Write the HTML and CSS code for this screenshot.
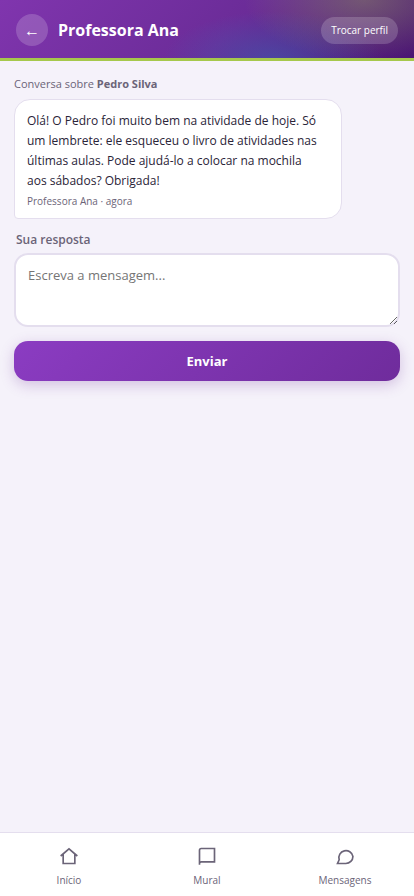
FILE: index.html
```html
<!DOCTYPE html>
<html lang="pt-BR">
<head>
<meta charset="utf-8">
<meta name="viewport" content="width=device-width, initial-scale=1">
<title>Professora Ana</title>
<link rel="stylesheet" href="styles.css">
</head>
<body>
<header class="topbar">
  <button class="back" type="button" aria-label="Voltar">←</button>
  <h1 class="title">Professora Ana</h1>
  <button class="switch" type="button">Trocar perfil</button>
</header>
<main class="content">
  <p class="context">Conversa sobre <strong>Pedro Silva</strong></p>
  <article class="bubble">
    <p class="bubble-text">Olá! O Pedro foi muito bem na atividade de hoje. Só um lembrete: ele esqueceu o livro de atividades nas últimas aulas. Pode ajudá-lo a colocar na mochila aos sábados? Obrigada!</p>
    <p class="bubble-meta">Professora Ana · agora</p>
  </article>
  <form class="reply">
    <label class="label" for="reply">Sua resposta</label>
    <textarea class="input" id="reply" placeholder="Escreva a mensagem..."></textarea>
    <button class="send" type="button">Enviar</button>
  </form>
</main>
<nav class="tabs">
  <a class="tab" href="#inicio">
    <svg class="icon" viewBox="0 0 24 24"><path d="M2 12 12 3.500 22 12M5 10v11h14V10"/></svg>
    Início
  </a>
  <a class="tab" href="#mural">
    <svg class="icon" viewBox="0 0 24 24"><path d="M3 22.500V5a2 2 0 0 1 2-2h16v16H5a2 2 0 0 0-2 2"/></svg>
    Mural
  </a>
  <a class="tab" href="#mensagens">
    <svg class="icon" viewBox="0 0 24 24"><path d="M21.500 12.500a8.500 8.500 0 0 1-8.500 8.500H3l2-4.500A8.500 8.500 0 1 1 21.500 12.500z"/></svg>
    Mensagens
  </a>
</nav>
</body>
</html>
```
FILE: styles.css
```css
* { box-sizing: border-box; }

body {
  margin: 0;
  min-height: 100vh;
  display: flex;
  flex-direction: column;
  background: #f5f2fa;
  color: #2a2438;
  font-family: "Segoe UI", "Open Sans", "Noto Sans", sans-serif;
}

h1, p { margin: 0; }
button, textarea { font-family: inherit; }

.topbar {
  display: flex;
  align-items: center;
  gap: 10px;
  padding: 14px 16px 12px;
  border-bottom: 3px solid #a6c84c;
  background:
    radial-gradient(ellipse 120px 60px at 88% 0, rgba(166, 200, 76, 0.32), transparent),
    radial-gradient(ellipse 110px 50px at 66% 100%, rgba(50, 110, 190, 0.45), transparent),
    linear-gradient(135deg, #8035ae 0%, #6b2c98 55%, #4a1572 100%);
  background-origin: border-box;
  color: #fff;
}

.back {
  width: 32px;
  height: 32px;
  padding: 0;
  border: 0;
  border-radius: 50%;
  background: rgba(255, 255, 255, 0.18);
  color: #fff;
  font-size: 16px;
}

.title {
  flex: 1;
  font-size: 16px;
  line-height: 24px;
  font-weight: 700;
}

.switch {
  padding: 5px 10px;
  border: 0;
  border-radius: 14px;
  background: rgba(255, 255, 255, 0.18);
  color: #fff;
  font-size: 10px;
  line-height: 17px;
}

.content {
  flex: 1;
  padding: 14px;
}

.context {
  margin-bottom: 6px;
  color: #6b6478;
  font-size: 11px;
  line-height: 18px;
}

.bubble {
  width: 85%;
  padding: 11px 20px 9px 12px;
  border: 1px solid #e4deee;
  border-radius: 16px 16px 16px 4px;
  background: #fff;
}

.bubble-text {
  font-size: 12px;
  line-height: 20px;
}

.bubble-meta {
  margin-top: 2px;
  color: #6b6478;
  font-size: 10px;
  line-height: 16px;
}

.reply {
  display: flex;
  flex-direction: column;
  margin-top: 12px;
}

.label {
  margin: 0 2px 4px;
  color: #6b6478;
  font-size: 12px;
  font-weight: 600;
  line-height: 18px;
}

.input {
  height: 74px;
  padding: 10px 12px;
  border: 2px solid #e4deee;
  border-radius: 14px;
  background: #fff;
  font-size: 13px;
  line-height: 20px;
  resize: vertical;
}

.input::placeholder { color: #757575; }

.send {
  margin-top: 14px;
  padding: 10px;
  border: 0;
  border-radius: 14px;
  background: linear-gradient(135deg, #8b3cc2, #6f2c9c);
  box-shadow: 0 4px 14px rgba(107, 44, 152, 0.25);
  color: #fff;
  font-size: 13px;
  font-weight: 700;
  line-height: 20px;
}

.tabs {
  display: grid;
  grid-template-columns: repeat(3, 1fr);
  padding: 13px 0 8px;
  border-top: 1px solid #e4deee;
  background: #fff;
}

.tab {
  display: flex;
  flex-direction: column;
  align-items: center;
  gap: 6px;
  color: #6b6478;
  font-size: 10px;
  line-height: 16px;
  text-decoration: none;
}

.icon {
  width: 20px;
  height: 20px;
  fill: none;
  stroke: currentColor;
  stroke-width: 2;
}
```
